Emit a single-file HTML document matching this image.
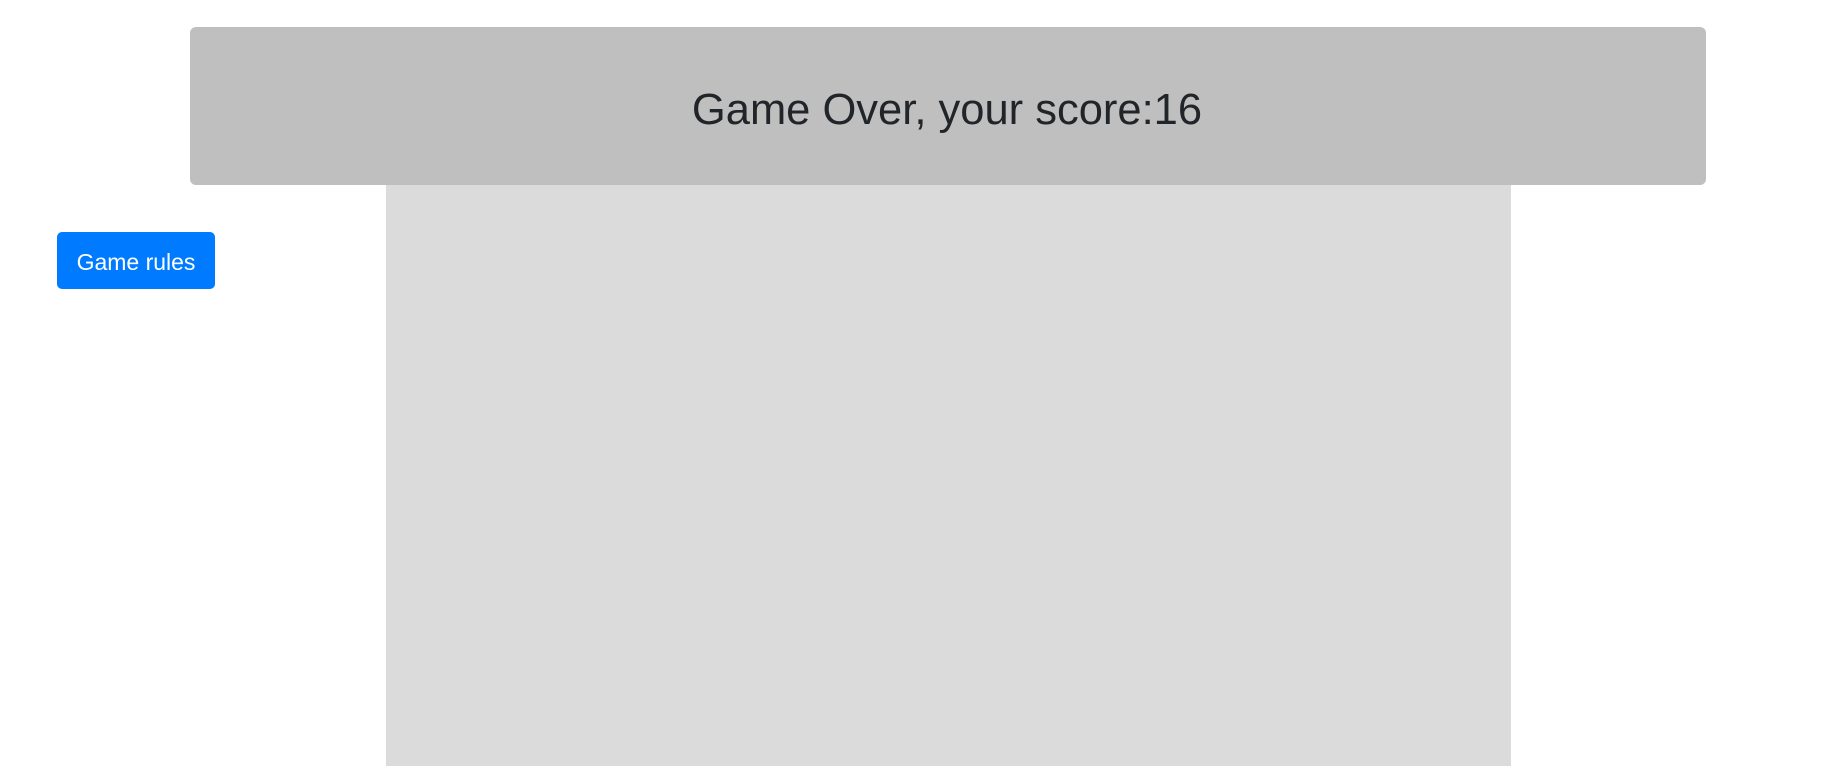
<!DOCTYPE html>
<html><head><style>
body{margin:0;width:1844px;height:766px;background:#fff;position:relative;overflow:hidden;font-family:"Liberation Sans",sans-serif}
.hdr{position:absolute;left:190px;top:27px;width:1516px;height:158px;background:#bfbfbf;border-radius:6px}
.hdr span{position:absolute;left:0;right:0;top:83px;text-align:center;font-size:43.5px;color:#212529;line-height:0;transform:translateX(-1px)}
.game{position:absolute;left:386px;top:185px;width:1125px;height:581px;background:#dbdbdb}
.btn{position:absolute;left:57px;top:232px;width:158px;height:57px;background:#007bff;border-radius:5px;color:#fff;font-size:23px;line-height:60px;text-align:center}
</style></head><body>
<div class="hdr"><span>Game Over, your score:16</span></div>
<div class="game"></div>
<div class="btn">Game rules</div>
</body></html>
